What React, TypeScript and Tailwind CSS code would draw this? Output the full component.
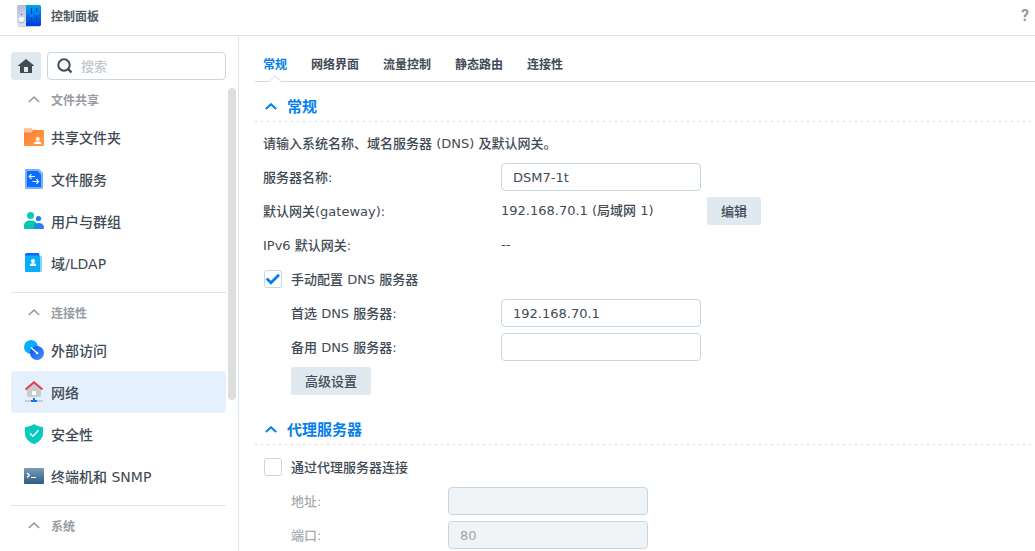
import { useState } from "react"
import type { ReactNode } from "react"

const ControlPanelLogo = () => (
  <svg width="24" height="24" viewBox="0 0 24 24" aria-hidden="true">
    <defs>
      <linearGradient id="logoGray" x1="0" y1="0" x2="0" y2="1">
        <stop offset="0" stopColor="#b4bcd8" />
        <stop offset="1" stopColor="#dfe2f0" />
      </linearGradient>
      <linearGradient id="logoBlue" x1="0" y1="0" x2="0" y2="1">
        <stop offset="0" stopColor="#00a8f0" />
        <stop offset="1" stopColor="#0038e0" />
      </linearGradient>
    </defs>
    <rect x="1" y="3" width="22" height="20" rx="1.5" fill="#c9d0dc" />
    <path d="M1.5 1H9v21H1.5A1.5 1.5 0 0 1 0 20.500V2.500A1.500 1.500 0 0 1 1.500 1z" fill="url(#logoGray)" />
    <path d="M9 1h13.500A1.500 1.500 0 0 1 24 2.500v18a1.500 1.500 0 0 1-1.500 1.500H9z" fill="url(#logoBlue)" />
    <circle cx="4.500" cy="16.500" r="3" fill="#a9afc6" />
    <circle cx="4.500" cy="15.500" r="2.800" fill="#f7f8fc" />
    <circle cx="4.500" cy="10.500" r=".6" fill="#4c556b" />
    <path d="M14 4h1v14h-1zM19 4h1v14h-1z" fill="#06418f" />
    <circle cx="14.500" cy="11.500" r="1.800" fill="#0a84f5" />
    <circle cx="19.500" cy="9.500" r="1.800" fill="#0a84f5" />
  </svg>
)

const HomeIcon = () => (
  <svg width="16" height="14" viewBox="0 0 16 14" aria-hidden="true">
    <path d="M8 0l8 6.500v.5h-2v7H2V7H0v-.5z" fill="#414b55" />
    <path d="M6 8h4v5H6z" fill="#e1e9f0" />
  </svg>
)

const SearchIcon = () => (
  <svg width="16" height="16" viewBox="0 0 16 16" fill="none" stroke="#414b55" strokeWidth="2" aria-hidden="true">
    <circle cx="7" cy="7" r="5.700" />
    <path d="M11 11l3.500 3.500" strokeWidth="2.400" />
  </svg>
)

const Chevron = ({ strokeWidth = 1.6 }: { strokeWidth?: number }) => (
  <svg width="12" height="8" viewBox="0 0 12 8" fill="none" stroke="currentColor" strokeWidth={strokeWidth} aria-hidden="true">
    <path d="M.8 6L6 1.200 11.200 6" />
  </svg>
)

const FolderIcon = () => (
  <svg width="20" height="20" viewBox="0 0 20 20">
    <defs>
      <linearGradient id="folder" x1="0" y1="0" x2="1" y2="1">
        <stop offset="0" stopColor="#ff7a33" />
        <stop offset="1" stopColor="#ffa149" />
      </linearGradient>
    </defs>
    <path d="M0 2a1 1 0 0 1 1-1h6.500l2 2H19a1 1 0 0 1 1 1v4H0z" fill="#ffc79d" />
    <path d="M0 5.500h7.500L9.500 3H19a1 1 0 0 1 1 1v14a1 1 0 0 1-1 1H1a1 1 0 0 1-1-1z" fill="url(#folder)" />
    <circle cx="13.700" cy="12" r="2" fill="#fff" />
    <path d="M10 17v-.7c0-1.200 1.200-1.800 3.700-1.800s3.300.6 3.300 1.800v.7z" fill="#fff" />
  </svg>
)

const FileServiceIcon = () => (
  <svg width="20" height="20" viewBox="0 0 20 20">
    <path d="M1 1a1 1 0 0 1 1-1h13l4 4v15a1 1 0 0 1-1 1H2a1 1 0 0 1-1-1z" fill="#7db0fa" />
    <path d="M3 2h10.500L17 5.500V18H4a1 1 0 0 1-1-1z" fill="#0a6dff" />
    <path d="M5.500 7.500H11M7.500 5.200L5.200 7.500l2.300 2.300M8.500 12.500h6M12.300 10.200l2.300 2.300-2.300 2.300" fill="none" stroke="#fff" strokeWidth="1.100" />
  </svg>
)

const UsersIcon = () => (
  <svg width="20" height="20" viewBox="0 0 20 20">
    <circle cx="14.500" cy="7.500" r="2.600" fill="#1d7cf8" />
    <path d="M10 18v-2c0-2.500 1.800-4 4.500-4s5.500 1.500 5.500 4.200V17a1 1 0 0 1-1 1z" fill="#2a7fff" />
    <circle cx="6.500" cy="4.500" r="3.500" fill="#0ac8b8" />
    <path d="M0 15c0-3.800 2.500-5.500 6.500-5.500s6.500 1.700 6.500 5.500v3H1a1 1 0 0 1-1-1z" fill="#08c6b2" />
    <path d="M10 18v-2c0-1.500.8-2.700 2.200-3.400.5.700.8 1.500.8 2.400v3z" fill="#1468c8" opacity=".5" />
  </svg>
)

const DomainIcon = () => (
  <svg width="20" height="20" viewBox="0 0 20 20">
    <path d="M3 2.500h13.500A1.500 1.500 0 0 1 18 4v14a1 1 0 0 1-1 1H3z" fill="#87d5fa" />
    <path d="M2.500 0h12a.8.800 0 0 1 .8.800V3H1V1.500A1.500 1.500 0 0 1 2.500 0z" fill="#0a6cf5" />
    <path d="M1 1.500C1 2.200 1.500 2.500 2.500 2.500H16V19H2a1 1 0 0 1-1-1z" fill="#08acf8" />
    <circle cx="9" cy="8" r="2" fill="#fff" />
    <path d="M6 13v-1c0-1.200 1-1.800 3-1.800s3.200.6 3.200 1.800v1z" fill="#fff" />
  </svg>
)

const ExternalAccessIcon = () => (
  <svg width="20" height="20" viewBox="0 0 20 20">
    <defs>
      <linearGradient id="globe" x1="0" y1="0" x2="1" y2="1">
        <stop offset="0" stopColor="#0050f5" />
        <stop offset="1" stopColor="#4a94ff" />
      </linearGradient>
    </defs>
    <circle cx="7" cy="7" r="7" fill="#08aefc" />
    <circle cx="13" cy="13" r="7" fill="url(#globe)" />
    <path d="M7 7.500l5.500 5" stroke="#fff" strokeWidth="1.300" />
    <circle cx="13" cy="13" r="1.300" fill="#fff" />
  </svg>
)

const NetworkIcon = () => (
  <svg width="20" height="22" viewBox="0 0 20 22">
    <path d="M3 8l7-6.500L17 8v7a1 1 0 0 1-1 1H4a1 1 0 0 1-1-1z" fill="#c7ccd0" />
    <path d="M1.500 8.500L10 1.300l8.500 7.200" fill="none" stroke="#e63b48" strokeWidth="2" />
    <path d="M8 10h4v4H8z" fill="#fff" />
    <path d="M1 19h18v2H1z" fill="#c7ccd0" />
    <path d="M9 17h2v2h2v2H7v-2h2z" fill="#0a78f0" />
  </svg>
)

const ShieldIcon = () => (
  <svg width="20" height="20" viewBox="0 0 20 20">
    <path d="M10 0c2.500 1.700 5.500 2.700 9 3v6c0 5.500-3.500 9-9 11-5.500-2-9-5.500-9-11V3c3.500-.3 6.500-1.300 9-3z" fill="#08c9bd" />
    <path d="M6 9.500l3 2.800 5.500-6" fill="none" stroke="#fff" strokeWidth="1.300" />
  </svg>
)

const TerminalIcon = () => (
  <svg width="20" height="20" viewBox="0 0 20 20">
    <defs>
      <linearGradient id="terminal" x1="0" y1="0" x2="0" y2="1">
        <stop offset="0" stopColor="#7a9bb6" />
        <stop offset="1" stopColor="#2c5c85" />
      </linearGradient>
    </defs>
    <rect y="2" width="20" height="16" rx="1" fill="url(#terminal)" />
    <path d="M3 7l2.500 2.200L3 11.500M7 11.500h5" fill="none" stroke="#fff" strokeWidth="1.200" />
  </svg>
)

const groups = [
  {
    title: "文件共享",
    items: [
      { name: "共享文件夹", icon: <FolderIcon /> },
      { name: "文件服务", icon: <FileServiceIcon /> },
      { name: "用户与群组", icon: <UsersIcon /> },
      { name: "域/LDAP", icon: <DomainIcon /> },
    ],
  },
  {
    title: "连接性",
    items: [
      { name: "外部访问", icon: <ExternalAccessIcon /> },
      { name: "网络", icon: <NetworkIcon /> },
      { name: "安全性", icon: <ShieldIcon /> },
      { name: "终端机和 SNMP", icon: <TerminalIcon /> },
    ],
  },
  { title: "系统", items: [] },
]

const tabs = ["常规", "网络界面", "流量控制", "静态路由", "连接性"]

const fieldClass =
  "h-7 w-50 rounded-[4px] border border-[#c6d7e2] bg-white px-[11px] text-[13px] text-[#414b55] outline-none disabled:bg-[#f0f4f7] disabled:text-[#a0a5aa]"
const buttonClass = "h-7 rounded-[3px] bg-[#e1e9f0] px-3.5 pt-0.5 text-[13px] font-medium text-[#414b55]"

function Sidebar() {
  const [active, setActive] = useState("网络")

  return (
    <aside className="flex w-[239px] shrink-0 flex-col border-r border-[#dbe4ec] pt-4 pl-[11px]">
      <div className="flex gap-1.5 pr-3">
        <button aria-label="主页" className="flex h-7 w-[30px] items-center justify-center rounded-[3px] bg-[#e1e9f0]">
          <HomeIcon />
        </button>
        <label className="flex h-7 min-w-0 flex-1 items-center gap-2 rounded-[4px] border border-[#c6d7e2] pl-[9px]">
          <SearchIcon />
          <input
            type="search"
            aria-label="搜索"
            placeholder="搜索"
            className="min-w-0 flex-1 pt-0.5 text-[13px] outline-none placeholder:text-[#c3c7cb]"
          />
        </label>
      </div>
      <div className="flex min-h-0 flex-1 gap-0.5 pt-1">
        <nav className="min-w-0 flex-1 overflow-hidden">
          {groups.map((group, index) => (
            <section key={group.title} className={index > 0 ? "mt-2 border-t border-[#dbe4ec] pt-1" : ""}>
              <button className="flex h-8 w-full items-center gap-[11px] pl-[17px] text-xs font-bold text-[#969ca1]">
                <Chevron />
                <span className="pt-0.5">{group.title}</span>
              </button>
              {group.items.map((item) => (
                <button
                  key={item.name}
                  onClick={() => setActive(item.name)}
                  className={`flex h-[42px] w-full items-center gap-[7px] rounded-[4px] pl-[13px] text-sm font-medium text-[#414b55] ${
                    item.name === active ? "bg-[#e4f0fc]" : ""
                  }`}
                >
                  {item.icon}
                  <span className="pt-0.5">{item.name}</span>
                </button>
              ))}
            </section>
          ))}
        </nav>
        <div className="mt-1 mr-0.5 h-78 w-2 rounded-full bg-[#dedede]" />
      </div>
    </aside>
  )
}

function Tabs() {
  const [active, setActive] = useState(tabs[0])

  return (
    <div role="tablist" className="flex h-[46px] gap-6 border-b border-[#cfdbe4] pl-2">
      {tabs.map((tab) => (
        <button
          key={tab}
          role="tab"
          aria-selected={tab === active}
          onClick={() => setActive(tab)}
          className={`relative pt-3 text-xs font-bold ${tab === active ? "text-[#057feb]" : "text-[#414b55]"}`}
        >
          {tab}
          {tab === active && (
            <svg width="12" height="7" viewBox="0 0 12 7" className="absolute -bottom-px left-1/2 -translate-x-1/2" aria-hidden="true">
              <path d="M0 6.500L6 .7l6 5.800V7H0z" fill="#fff" />
              <path d="M0 6.500L6 .7l6 5.800" fill="none" stroke="#cfdbe4" />
            </svg>
          )}
        </button>
      ))}
    </div>
  )
}

function Fieldset({ title, children }: { title: string; children: ReactNode }) {
  return (
    <section>
      <h2 className="h-[29px] pl-2.5 text-[15px] font-bold text-[#057feb]">
        <button className="flex h-full items-center gap-2.5">
          <Chevron strokeWidth={2} />
          <span className="pt-0.5">{title}</span>
        </button>
      </h2>
      <div className="h-px bg-[repeating-linear-gradient(90deg,#d0dbe2_0_2px,transparent_2px_6px)]" />
      <div className="pt-[5px] pl-2">{children}</div>
    </section>
  )
}

function CheckRow({ label, checked, onChange }: { label: string; checked: boolean; onChange: (value: boolean) => void }) {
  return (
    <label className="flex h-[34px] items-center gap-[9px] pl-px">
      <span className="grid size-[18px] place-items-center">
        <input
          type="checkbox"
          checked={checked}
          onChange={(e) => onChange(e.target.checked)}
          className="col-start-1 row-start-1 size-[18px] appearance-none rounded-[3px] border border-[#c6d7e2] bg-white"
        />
        {checked && (
          <svg width="16" height="12" viewBox="0 0 16 12" className="pointer-events-none col-start-1 row-start-1" aria-hidden="true">
            <path d="M1.700 5.500L6 9.700l8-8" fill="none" stroke="#057feb" strokeWidth="2.800" />
          </svg>
        )}
      </span>
      <span className="pt-0.5">{label}</span>
    </label>
  )
}

export default function App() {
  const [manualDns, setManualDns] = useState(true)
  const [proxy, setProxy] = useState(false)

  return (
    <div className="flex h-screen flex-col overflow-hidden bg-white font-['DejaVu_Sans','Noto_Sans_CJK_SC',sans-serif] text-[13px] font-medium text-[#414b55]">
      <header className="flex h-9 shrink-0 items-center border-b border-[#dbe4ec] pr-1.5 pb-1 pl-[17px]">
        <ControlPanelLogo />
        <h1 className="ml-2.5 pt-0.5 text-xs font-bold text-[#505a64]">控制面板</h1>
        <button aria-label="帮助" className="ml-auto font-['Roboto',sans-serif] text-base font-bold text-[#92999f]">
          ?
        </button>
      </header>
      <div className="flex min-h-0 flex-1">
        <Sidebar />
        <main className="min-w-0 flex-1 overflow-hidden pl-4">
          <Tabs />
          <div className="flex flex-col gap-[17px] pt-2.5">
            <Fieldset title="常规">
              <p className="flex h-[33px] items-center">请输入系统名称、域名服务器 (DNS) 及默认网关。</p>
              <div className="flex h-[34px] items-center">
                <label htmlFor="server-name" className="w-[238px] pt-0.5">服务器名称:</label>
                <input id="server-name" defaultValue="DSM7-1t" className={fieldClass} />
              </div>
              <div className="flex h-[34px] items-center">
                <span className="w-[238px] pt-0.5">默认网关(gateway):</span>
                <span className="mr-1.5 w-50">192.168.70.1 (局域网 1)</span>
                <button className={buttonClass}>编辑</button>
              </div>
              <div className="flex h-[34px] items-center">
                <span className="w-[238px] pt-0.5">IPv6 默认网关:</span>
                <span>--</span>
              </div>
              <CheckRow label="手动配置 DNS 服务器" checked={manualDns} onChange={setManualDns} />
              <div className="pl-7">
                <div className="flex h-[34px] items-center">
                  <label htmlFor="dns-1" className="w-[210px] pt-0.5">首选 DNS 服务器:</label>
                  <input id="dns-1" defaultValue="192.168.70.1" disabled={!manualDns} className={fieldClass} />
                </div>
                <div className="flex h-[34px] items-center">
                  <label htmlFor="dns-2" className="w-[210px] pt-0.5">备用 DNS 服务器:</label>
                  <input id="dns-2" disabled={!manualDns} className={fieldClass} />
                </div>
                <div className="flex h-[34px] items-center">
                  <button className={buttonClass}>高级设置</button>
                </div>
              </div>
            </Fieldset>
            <Fieldset title="代理服务器">
              <CheckRow label="通过代理服务器连接" checked={proxy} onChange={setProxy} />
              <div className={`pl-7 ${proxy ? "" : "text-[#a5aaae]"}`}>
                <div className="flex h-[34px] items-center">
                  <label htmlFor="proxy-host" className="w-[157px] pt-0.5">地址:</label>
                  <input id="proxy-host" disabled={!proxy} className={fieldClass} />
                </div>
                <div className="flex h-[34px] items-center">
                  <label htmlFor="proxy-port" className="w-[157px] pt-0.5">端口:</label>
                  <input id="proxy-port" defaultValue="80" disabled={!proxy} className={fieldClass} />
                </div>
              </div>
            </Fieldset>
          </div>
        </main>
      </div>
    </div>
  )
}
